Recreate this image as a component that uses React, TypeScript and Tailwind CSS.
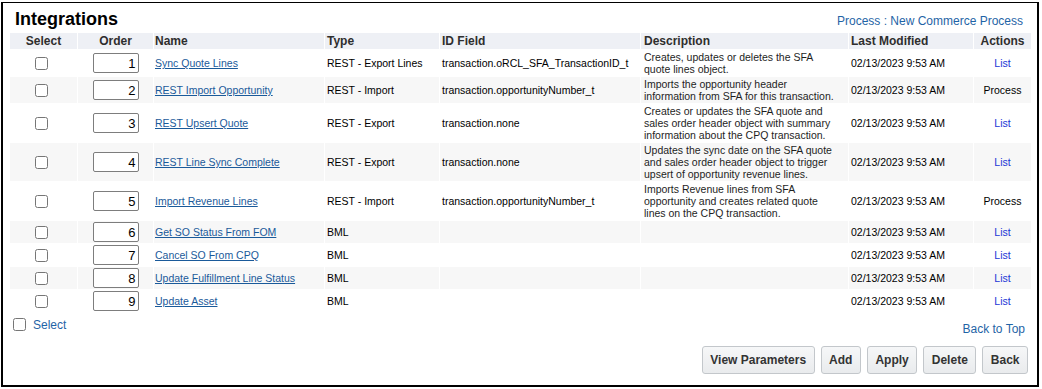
import { JSX } from "react/jsx-runtime";

interface Integration {
  order: number;
  name: string;
  type: string;
  idField: string;
  description: string;
  action: string;
}

const rows: Integration[] = [
  { order: 1, name: "Sync Quote Lines", type: "REST - Export Lines", idField: "transaction.oRCL_SFA_TransactionID_t", description: "Creates, updates or deletes the SFA quote lines object.", action: "List" },
  { order: 2, name: "REST Import Opportunity", type: "REST - Import", idField: "transaction.opportunityNumber_t", description: "Imports the opportunity header information from SFA for this transaction.", action: "Process" },
  { order: 3, name: "REST Upsert Quote", type: "REST - Export", idField: "transaction.none", description: "Creates or updates the SFA quote and sales order header object with summary information about the CPQ transaction.", action: "List" },
  { order: 4, name: "REST Line Sync Complete", type: "REST - Export", idField: "transaction.none", description: "Updates the sync date on the SFA quote and sales order header object to trigger upsert of opportunity revenue lines.", action: "List" },
  { order: 5, name: "Import Revenue Lines", type: "REST - Import", idField: "transaction.opportunityNumber_t", description: "Imports Revenue lines from SFA opportunity and creates related quote lines on the CPQ transaction.", action: "Process" },
  { order: 6, name: "Get SO Status From FOM", type: "BML", idField: "", description: "", action: "List" },
  { order: 7, name: "Cancel SO From CPQ", type: "BML", idField: "", description: "", action: "List" },
  { order: 8, name: "Update Fulfillment Line Status", type: "BML", idField: "", description: "", action: "List" },
  { order: 9, name: "Update Asset", type: "BML", idField: "", description: "", action: "List" },
];

const buttons: string[] = ["View Parameters", "Add", "Apply", "Delete", "Back"];

export default function App(): JSX.Element {
  return (
    <div className="bg-white w-[1042px] h-[389px] pt-[2px] pl-[1px] font-['Liberation_Sans',Arial,sans-serif]">
      <div className="w-[1038px] h-[385px] border-black border-t border-x-2 border-b-2">
        {/* Title */}
        <div className="flex items-baseline justify-between h-[29px] pt-[6px] pl-[12px] pr-[14px]">
          <h1 className="text-[18px] leading-[21px] font-bold text-black">Integrations</h1>
          <a className="text-[12px] leading-[14px] text-[#1f64a6]">Process : New Commerce Process</a>
        </div>

        {/* Table */}
        <table className="ml-[6px] w-[1023px] table-fixed border-separate border-spacing-[1px] text-[10.5px] leading-[12px] text-black">
          <colgroup>
            <col className="w-[67px]" />
            <col className="w-[75px]" />
            <col className="w-[170px]" />
            <col className="w-[114px]" />
            <col className="w-[200px]" />
            <col className="w-[207px]" />
            <col className="w-[124px]" />
            <col className="w-[57px]" />
          </colgroup>
          <thead>
            <tr className="text-[12px] leading-[16px] font-bold text-[#2e2e2e]">
              <th className="bg-[#eef0f5] text-center p-0">Select</th>
              <th className="bg-[#eef0f5] text-center p-0">Order</th>
              <th className="bg-[#eef0f5] text-left pl-[1px]">Name</th>
              <th className="bg-[#eef0f5] text-left pl-[2px]">Type</th>
              <th className="bg-[#eef0f5] text-left pl-[2px]">ID Field</th>
              <th className="bg-[#eef0f5] text-left pl-[3px]">Description</th>
              <th className="bg-[#eef0f5] text-left pl-[2px]">Last Modified</th>
              <th className="bg-[#eef0f5] text-center p-0">Actions</th>
            </tr>
          </thead>
          <tbody>
            {rows.map((row, index) => {
              const bg = index % 2 === 1 ? "bg-[#f7f7f7]" : "bg-white";
              return (
                <tr key={row.order}>
                  <td className={`${bg} text-center align-middle py-[1px] pr-[5px]`}>
                    <input type="checkbox" className="m-0 align-middle w-[13px] h-[13px]" />
                  </td>
                  <td className={`${bg} text-center align-middle py-[1px]`}>
                    <input
                      type="text"
                      defaultValue={row.order}
                      className="w-[46px] h-[20px] border border-[#7d7d7d] rounded-[2px] bg-white text-right pr-[2px] text-[13px] leading-[16px] text-black align-middle"
                    />
                  </td>
                  <td className={`${bg} align-middle pl-[1px] py-[1px]`}>
                    <a className="text-[#1a5a9a] underline">{row.name}</a>
                  </td>
                  <td className={`${bg} align-middle pl-[2px] py-[1px]`}>{row.type}</td>
                  <td className={`${bg} align-middle pl-[2px] py-[1px]`}>{row.idField}</td>
                  <td className={`${bg} align-middle pl-[3px] pr-[10px] py-[1px] text-[#1e1e1e]`}>{row.description}</td>
                  <td className={`${bg} align-middle pl-[2px] py-[1px]`}>02/13/2023 9:53 AM</td>
                  <td className={`${bg} align-middle text-center py-[1px]`}>
                    {row.action === "List" ? <a className="text-[#2236d6]">List</a> : <span>{row.action}</span>}
                  </td>
                </tr>
              );
            })}
          </tbody>
        </table>

        {/* Footer */}
        <div className="flex justify-between items-start pl-[10px] pr-[12px]">
          <label className="flex items-center gap-[7px] mt-[5px] h-[13px]">
            <input type="checkbox" className="m-0 w-[13px] h-[13px]" />
            <span className="text-[12px] leading-[14px] text-[#1f64a6]">Select</span>
          </label>
          <a className="mt-[9px] text-[12px] leading-[14px] text-[#1f64a6]">Back to Top</a>
        </div>

        <div className="flex justify-end gap-[6px] mt-[10px] pr-[9px]">
          {buttons.map((label) => (
            <button
              key={label}
              className="h-[28px] px-[7.5px] border border-[#c3c7cb] rounded-[3px] bg-gradient-to-b from-[#f6f7f8] to-[#e9ebed] text-[12px] font-bold text-[#333333]"
            >
              {label}
            </button>
          ))}
        </div>
      </div>
    </div>
  );
}
